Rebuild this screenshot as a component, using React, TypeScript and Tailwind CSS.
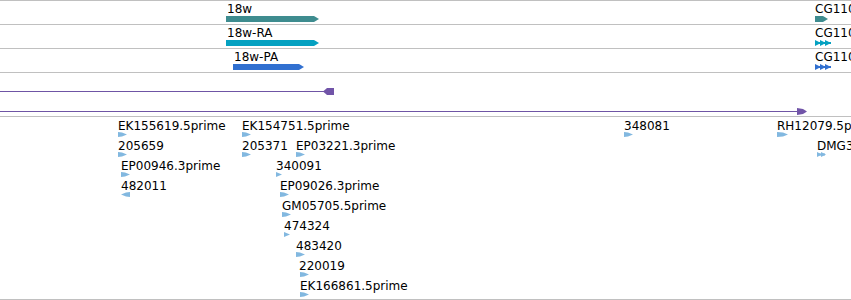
import React from 'react';

const font = { fontFamily: '"DejaVu Sans", Verdana, sans-serif' };

type BarProps = { x: number; top: number; width: number; color: string };

function GeneBar({ x, top, width, color }: BarProps) {
  const pts = `0,0 ${width - 5},0 ${width},3 ${width - 5},6 0,6`;
  return (
    <svg className="absolute" style={{ left: x, top }} width={width} height={6}>
      <polygon points={pts} fill={color} />
    </svg>
  );
}

function TripleArrow({ x, top, color }: { x: number; top: number; color: string }) {
  return (
    <svg className="absolute" style={{ left: x, top }} width={17} height={6}>
      <polygon points="0,0 6,3 0,6" fill={color} />
      <polygon points="5,0 11,3 5,6" fill={color} />
      <polygon points="10,0 16,3 10,6" fill={color} />
      <rect x={0} y={2} width={16} height={2} fill={color} />
    </svg>
  );
}

function GeneRow({
  label,
  labelX,
  barX,
  barW,
  color,
  cg,
}: {
  label: string;
  labelX: number;
  barX: number;
  barW: number;
  color: string;
  cg: 'bar' | 'triple';
}) {
  return (
    <div className="relative h-[24px] border-t border-[#c0c0c0]">
      <span className="absolute top-[1px] text-[12px] leading-[14px] text-black whitespace-nowrap" style={{ left: labelX }}>
        {label}
      </span>
      <GeneBar x={barX} top={15} width={barW} color={color} />
      {/* neighbouring gene, cut off by the view edge */}
      <span className="absolute left-[815px] top-[1px] text-[12px] leading-[14px] text-black whitespace-nowrap">
        CG11030
      </span>
      {cg === 'bar' ? (
        <GeneBar x={815} top={15} width={13} color={color} />
      ) : (
        <TripleArrow x={815} top={15} color={color} />
      )}
    </div>
  );
}

type Feature = { label: string; x: number; row: number; ax?: number; kind?: 'rev' | 'small' | 'double' | 'wide' };

const features: Feature[] = [
  { label: 'EK155619.5prime', x: 118, row: 0 },
  { label: '205659', x: 118, row: 1 },
  { label: 'EP00946.3prime', x: 121, row: 2 },
  { label: '482011', x: 121, row: 3, kind: 'rev' },
  { label: 'EK154751.5prime', x: 242, row: 0 },
  { label: '205371', x: 242, row: 1 },
  { label: 'EP03221.3prime', x: 296, row: 1 },
  { label: '340091', x: 276, row: 2, kind: 'small' },
  { label: 'EP09026.3prime', x: 280, row: 3 },
  { label: 'GM05705.5prime', x: 282, row: 4 },
  { label: '474324', x: 284, row: 5, kind: 'small' },
  { label: '483420', x: 296, row: 6 },
  { label: '220019', x: 299, ax: 300, row: 7 },
  { label: 'EK166861.5prime', x: 300, row: 8 },
  { label: '348081', x: 624, row: 0 },
  { label: 'RH12079.5prime', x: 777, row: 0, kind: 'wide' },
  { label: 'DMG3-1A.5prime', x: 817, row: 1, kind: 'double' },
];

const FEAT = '#82b8e0';

function FeatureArrow({ kind }: { kind?: Feature['kind'] }) {
  if (kind === 'rev') {
    return (
      <svg width={9} height={5}>
        <polygon points="9,0 5,0.5 0,2.5 5,4.5 9,5" fill={FEAT} />
      </svg>
    );
  }
  if (kind === 'small') {
    return (
      <svg width={6} height={5}>
        <polygon points="0,0 6,2.5 0,5" fill={FEAT} />
      </svg>
    );
  }
  if (kind === 'double') {
    return (
      <svg width={10} height={5}>
        <polygon points="0,0 5,2.5 0,5" fill={FEAT} />
        <polygon points="4,0 9,2.5 4,5" fill={FEAT} />
        <rect x={0} y={1.5} width={8} height={2} fill={FEAT} />
      </svg>
    );
  }
  const w = kind === 'wide' ? 11 : 9;
  return (
    <svg width={w} height={5}>
      <polygon points={`0,0 ${w - 5},0.5 ${w},2.5 ${w - 5},4.5 0,5`} fill={FEAT} />
    </svg>
  );
}

export default function App() {
  return (
    <div className="w-[851px] h-[300px] overflow-hidden bg-white" style={font}>
      <GeneRow label="18w" labelX={227} barX={226} barW={93} color="#3e8c8f" cg="bar" />
      <GeneRow label="18w-RA" labelX={227} barX={226} barW={93} color="#05a1c1" cg="triple" />
      <GeneRow label="18w-PA" labelX={234} barX={233} barW={71} color="#3170d0" cg="triple" />

      {/* purple span tracks */}
      <div className="relative h-[44px] border-t border-[#c0c0c0]">
        <div className="absolute left-0 top-[18px] h-px w-[325px] bg-[#6f55a5]" />
        <svg className="absolute left-[323px] top-[15px]" width={11} height={7}>
          <polygon points="0,3.5 4,0 11,0 11,7 4,7" fill="#7154a8" />
        </svg>
        <div className="absolute left-0 top-[38px] h-px w-[799px] bg-[#6f55a5]" />
        <svg className="absolute left-[797px] top-[35px]" width={10} height={7}>
          <polygon points="0,0 6,1 10,3.5 6,6 0,7" fill="#7154a8" />
        </svg>
      </div>

      {/* feature track: each feature sits at its genomic x, stacked in rows of 20px */}
      <div className="relative h-[183px] border-t border-[#c0c0c0]">
        {features.map((f) => (
          <div key={f.label} className="absolute flex flex-col" style={{ left: f.x, top: 2 + f.row * 20 }}>
            <div className="text-[12px] leading-[14px] text-black whitespace-nowrap">{f.label}</div>
            <div className="mt-[-1px] flex leading-none" style={{ marginLeft: (f.ax ?? f.x) - f.x }}>
              <FeatureArrow kind={f.kind} />
            </div>
          </div>
        ))}
      </div>
      <div className="h-px border-t border-[#c0c0c0]" />
    </div>
  );
}
